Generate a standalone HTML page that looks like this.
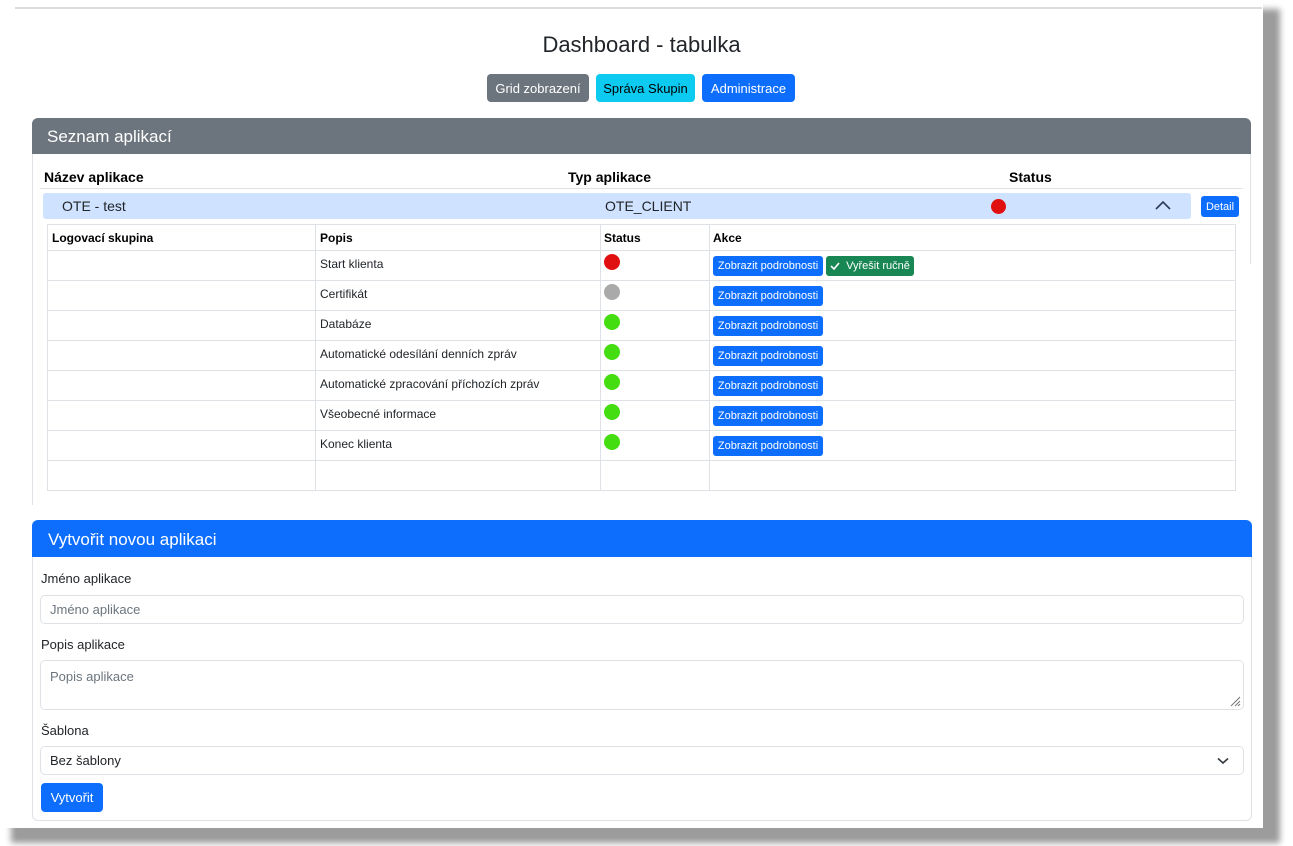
<!DOCTYPE html>
<html><head><meta charset="utf-8">
<style>
*{box-sizing:border-box;margin:0;padding:0}
html,body{width:1293px;height:846px;overflow:hidden;background:#fff;font-family:"Liberation Sans",Arial,sans-serif;color:#212529}
.shadow{position:absolute;left:0;top:0;width:1263px;height:828px;background:#fff;box-shadow:14px 12px 6px 3px #9c9c9c}
.a{position:absolute}
.btn{position:absolute;border-radius:4px;color:#fff;font-size:13px;display:flex;align-items:center;justify-content:center;white-space:nowrap}
.sm{position:absolute;background:#0d6efd;color:#fff;border-radius:3px;font-size:11px;height:20px;display:flex;align-items:center;justify-content:center;white-space:nowrap}
.dot{position:absolute;width:16px;height:16px;border-radius:50%}
.t{position:absolute;font-size:12px;white-space:nowrap}
.hl{position:absolute;height:1px;background:#dee2e6}
.vl{position:absolute;width:1px;background:#dee2e6}
.inp{position:absolute;border:1px solid #dee2e6;border-radius:5px;background:#fff;font-size:13px;color:#6c757d;padding-left:9px}
.lbl{position:absolute;font-size:13px;color:#212529}
</style></head><body>
<div class="shadow"></div>
<div class="a" style="left:15px;top:7px;width:1247px;height:2px;background:#dcdcdc"></div>
<div class="a" style="left:0;width:1283px;top:32px;text-align:center;font-size:22px;color:#212529">Dashboard - tabulka</div>
<div class="btn" style="left:487px;top:74px;width:102px;height:28px;background:#6c757d">Grid zobrazení</div>
<div class="btn" style="left:596px;top:74px;width:99px;height:28px;background:#0dcaf0;color:#000">Správa Skupin</div>
<div class="btn" style="left:702px;top:74px;width:93px;height:28px;background:#0d6efd">Administrace</div>

<div class="a" style="left:32px;top:118px;width:1219px;height:36px;background:#6c757d;border-radius:6px 6px 0 0"></div>
<div class="a" style="left:47px;top:127px;font-size:17px;color:#fff">Seznam aplikací</div>
<div class="vl" style="left:32px;top:154px;height:351px"></div>
<div class="vl" style="left:1250px;top:154px;height:110px"></div>
<div class="a" style="left:44px;top:169px;font-size:14px;font-weight:bold;color:#000">Název aplikace</div>
<div class="a" style="left:568px;top:169px;font-size:14px;font-weight:bold;color:#000">Typ aplikace</div>
<div class="a" style="left:1009px;top:169px;font-size:14px;font-weight:bold;color:#000">Status</div>
<div class="hl" style="left:40px;top:188px;width:1203px"></div>
<div class="a" style="left:43px;top:193px;width:1148px;height:26px;background:#cfe2ff;border-radius:3px"></div>
<div class="a" style="left:62px;top:198px;font-size:14px;color:#212529">OTE - test</div>
<div class="a" style="left:605px;top:198px;font-size:14px;color:#212529">OTE_CLIENT</div>
<div class="dot" style="left:991px;top:199px;width:15px;height:15px;background:#e01010"></div>
<svg class="a" style="left:1155px;top:200px" width="16" height="10" viewBox="0 0 16 10"><path d="M1 9 L8 2 L15 9" fill="none" stroke="#2b3a55" stroke-width="1.6"/></svg>
<div class="sm" style="left:1201px;top:196px;width:38px;height:21px">Detail</div>

<div class="a" style="left:47px;top:224px;width:1189px;height:267px;border:1px solid #dee2e6"></div>
<div class="hl" style="left:47px;top:250px;width:1189px"></div>
<div class="hl" style="left:47px;top:280px;width:1189px"></div>
<div class="hl" style="left:47px;top:310px;width:1189px"></div>
<div class="hl" style="left:47px;top:340px;width:1189px"></div>
<div class="hl" style="left:47px;top:370px;width:1189px"></div>
<div class="hl" style="left:47px;top:400px;width:1189px"></div>
<div class="hl" style="left:47px;top:430px;width:1189px"></div>
<div class="hl" style="left:47px;top:460px;width:1189px"></div>
<div class="vl" style="left:315px;top:224px;height:267px"></div>
<div class="vl" style="left:600px;top:224px;height:267px"></div>
<div class="vl" style="left:709px;top:224px;height:267px"></div>
<div class="t" style="left:52px;top:231px;font-weight:bold;color:#000">Logovací skupina</div>
<div class="t" style="left:320px;top:231px;font-weight:bold;color:#000">Popis</div>
<div class="t" style="left:604px;top:231px;font-weight:bold;color:#000">Status</div>
<div class="t" style="left:713px;top:231px;font-weight:bold;color:#000">Akce</div>

<div class="t" style="left:320px;top:257px">Start klienta</div>
<div class="t" style="left:320px;top:287px">Certifikát</div>
<div class="t" style="left:320px;top:317px">Databáze</div>
<div class="t" style="left:320px;top:347px">Automatické odesílání denních zpráv</div>
<div class="t" style="left:320px;top:377px">Automatické zpracování příchozích zpráv</div>
<div class="t" style="left:320px;top:407px">Všeobecné informace</div>
<div class="t" style="left:320px;top:437px">Konec klienta</div>

<div class="dot" style="left:604px;top:254px;background:#e01010"></div>
<div class="dot" style="left:604px;top:284px;background:#aaaaaa"></div>
<div class="dot" style="left:604px;top:314px;background:#44dd11"></div>
<div class="dot" style="left:604px;top:344px;background:#44dd11"></div>
<div class="dot" style="left:604px;top:374px;background:#44dd11"></div>
<div class="dot" style="left:604px;top:404px;background:#44dd11"></div>
<div class="dot" style="left:604px;top:434px;background:#44dd11"></div>

<div class="sm" style="left:713px;top:256px;width:110px">Zobrazit podrobnosti</div>
<div class="sm" style="left:826px;top:256px;width:88px;background:#198754"><svg width="10" height="8" viewBox="0 0 10 8" style="margin-right:6px"><path d="M1 4 L4 7 L9 1" fill="none" stroke="#fff" stroke-width="1.6"/></svg>Vyřešit ručně</div>
<div class="sm" style="left:713px;top:286px;width:110px">Zobrazit podrobnosti</div>
<div class="sm" style="left:713px;top:316px;width:110px">Zobrazit podrobnosti</div>
<div class="sm" style="left:713px;top:346px;width:110px">Zobrazit podrobnosti</div>
<div class="sm" style="left:713px;top:376px;width:110px">Zobrazit podrobnosti</div>
<div class="sm" style="left:713px;top:406px;width:110px">Zobrazit podrobnosti</div>
<div class="sm" style="left:713px;top:436px;width:110px">Zobrazit podrobnosti</div>

<div class="a" style="left:32px;top:520px;width:1220px;height:301px;border:1px solid #dee2e6;border-radius:6px"></div>
<div class="a" style="left:32px;top:520px;width:1220px;height:37px;background:#0d6efd;border-radius:6px 6px 0 0"></div>
<div class="a" style="left:48px;top:530px;font-size:17px;color:#fff">Vytvořit novou aplikaci</div>
<div class="lbl" style="left:41px;top:571px">Jméno aplikace</div>
<div class="inp" style="left:40px;top:595px;width:1204px;height:29px;line-height:27px">Jméno aplikace</div>
<div class="lbl" style="left:41px;top:637px">Popis aplikace</div>
<div class="inp" style="left:40px;top:660px;width:1204px;height:50px;padding-top:8px">Popis aplikace</div>
<svg class="a" style="left:1229px;top:695px" width="12" height="12" viewBox="0 0 12 12"><path d="M11 2 L2 11 M11 6 L6 11 M11 9 L9 11" stroke="#777" stroke-width="1"/></svg>
<div class="lbl" style="left:41px;top:723px">Šablona</div>
<div class="inp" style="left:40px;top:746px;width:1204px;height:29px;line-height:27px;color:#212529">Bez šablony</div>
<svg class="a" style="left:1217px;top:757px" width="12" height="8" viewBox="0 0 12 8"><path d="M1 1.5 L6 6 L11 1.5" fill="none" stroke="#343a40" stroke-width="1.6"/></svg>
<div class="btn" style="left:41px;top:783px;width:62px;height:29px;background:#0d6efd;font-size:13px">Vytvořit</div>
</body></html>
